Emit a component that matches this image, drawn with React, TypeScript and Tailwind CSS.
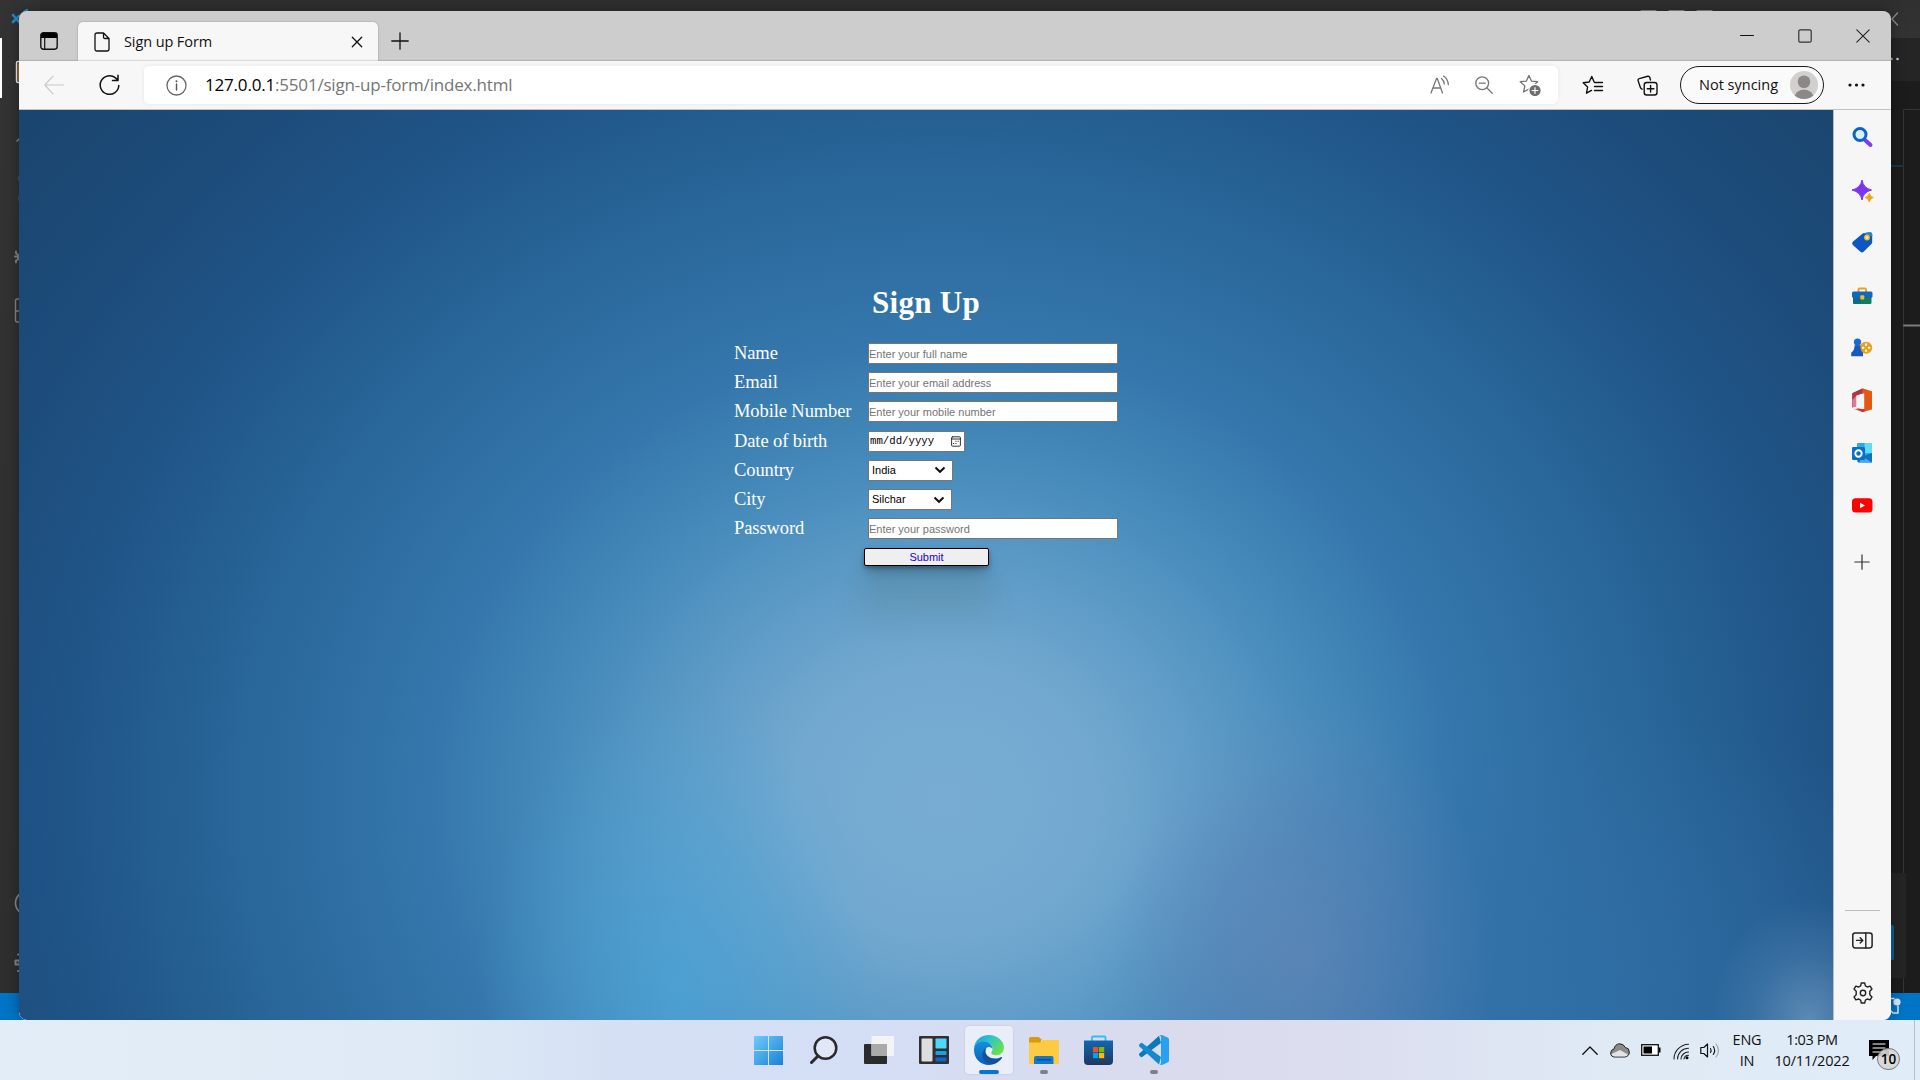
import React from "react";

const stroke = (color: string, width = 1.3) => ({
  fill: "none",
  stroke: color,
  strokeWidth: width,
  strokeLinecap: "round" as const,
  strokeLinejoin: "round" as const,
});

/* ---------- Editor window behind the browser ---------- */

function Backdrop() {
  return (
    <div className="absolute inset-0 flex flex-col bg-[#1e1e1e]">
      <div className="flex min-h-0 flex-1">
        <div className="w-10 bg-linear-to-b from-[#333333] to-[#2e2e2e]" />
        <div className="flex flex-1 flex-col">
          <div className="h-[38px] bg-linear-to-b from-[#2f2f2f] to-[#333333]" />
          <div className="h-[43px] bg-[#252525]" />
          <div className="flex-1 bg-[#1c1c1c]" />
        </div>
      </div>
      <div className="h-[27px] bg-[#0074c6]" />
      <svg className="absolute left-0 top-0" width="30" height="1020" viewBox="0 0 30 1020">
        <rect x="0" y="38" width="2" height="60" fill="#ffffff" />
        <path d="M13 15l6 7M13 22l6-6M24 12l3-2" {...stroke("#2489ca", 2.6)} />
        <rect x="16.5" y="61.5" width="10" height="21" rx="1.5" {...stroke("#e8f2ff", 1.4)} />
        <path d="M18.2 64v17" {...stroke("#b9791b", 1.4)} />
        <path d="M17 141l2-2" {...stroke("#858585", 1.6)} />
        <path d="M18.5 177v3M18.5 197v3" {...stroke("#35536f", 1.4)} />
        <path d="M16 251.500v2l2 1v5l-2 1v2M15 256.500h4" {...stroke("#858585", 1.8)} />
        <path d="M20 299h-2.500q-2 0-2 2v19q0 2 2 2h2.500M16 311h4" {...stroke("#858585", 1.4)} />
        <circle cx="27" cy="903" r="11.500" {...stroke("#8a8a8a", 1.6)} />
        <path d="M15.500 960.500h4v4h-4zM18 954.500h1M18 971h1" {...stroke("#858585", 2)} />
      </svg>
      <svg className="absolute right-0 top-0" width="290" height="1020" viewBox="1630 0 290 1020">
        <path d="M1641 10.500h15M1669 10.500h15M1697 10.500h15" {...stroke("#8b8b8b", 1)} />
        <path d="M1897.500 13l-5.500 6 5.500 6" {...stroke("#8b8b8b", 1.4)} />
        <circle cx="1891.500" cy="59" r="1.300" fill="#c9a26d" />
        <circle cx="1897.500" cy="59" r="1.300" fill="#b9cfe2" />
        <path d="M1920 109.500h-16.500V993" {...stroke("#343434", 1)} />
        <path d="M1891 166h12" {...stroke("#1d3548", 2)} />
        <path d="M1904 325.500h16" {...stroke("#7d7d7d", 2)} />
        <rect x="1880" y="873" width="26" height="105" fill="#252526" />
        <rect x="1880" y="925" width="14" height="35" rx="1.500" fill="#0e5f96" />
        <circle cx="1897" cy="1002" r="3.600" fill="#dbe9f4" />
        <path d="M1891 998.500h3M1891 1011l2 2h5v-7" {...stroke("#dbe9f4", 1.5)} />
      </svg>
    </div>
  );
}

/* ---------- Browser chrome ---------- */

function TitleBar() {
  return (
    <div className="flex h-[50px] shrink-0 bg-[#cdcdcd]">
      <svg className="ml-[21px] mt-[21px]" width="18" height="18" viewBox="0 0 18 18">
        <rect x="0.800" y="0.800" width="16.400" height="16.400" rx="2.600" {...stroke("#111", 1.4)} />
        <path d="M1 6V3.200Q1 1 3.200 1h11.600Q17 1 17 3.200V6z" fill="#000" />
        <path d="M4.700 5.500V17" {...stroke("#111", 1.2)} />
      </svg>
      <div className="ml-5 mt-[11px] flex h-[39px] w-[300px] items-center rounded-t-[5px] bg-[#f7f7f7] shadow-[0_0_2px_rgba(0,0,0,0.3)]">
        <svg className="ml-4" width="16" height="20" viewBox="0 0 16 20">
          <path d="M1 3Q1 1 3 1h6.500l5.500 5.500V17q0 2-2 2H3q-2 0-2-2zM9.500 1v4q0 1.500 1.500 1.500h4" {...stroke("#111", 1.3)} />
        </svg>
        <span className="ml-[14px] w-[120px] whitespace-nowrap font-['Open_Sans'] text-[14.5px] tracking-[-0.1px] text-[#111]">Sign up Form</span>
        <svg className="ml-auto mr-[15px] mt-px" width="12" height="12" viewBox="0 0 12 12">
          <path d="M1.300 1.300l9.400 9.400M10.700 1.300l-9.400 9.400" {...stroke("#111", 1.3)} />
        </svg>
      </div>
      <svg className="ml-[13px] mt-[21px]" width="18" height="18" viewBox="0 0 18 18">
        <path d="M9 .8v16.400M.8 9h16.400" {...stroke("#111", 1.3)} />
      </svg>
      <div className="ml-auto mr-[21px] mt-[18px] flex h-[14px] items-center gap-11">
        <svg width="14" height="14" viewBox="0 0 14 14"><path d="M.5 6.500h13" {...stroke("#111", 1)} /></svg>
        <svg width="14" height="14" viewBox="0 0 14 14"><rect x=".8" y=".8" width="12.400" height="12.400" rx="1.500" {...stroke("#333", 1.2)} /></svg>
        <svg width="14" height="14" viewBox="0 0 14 14"><path d="M.8.800l12.400 12.400M13.200.800L.8 13.200" {...stroke("#222", 1.1)} /></svg>
      </div>
    </div>
  );
}

const STAR = "M9 1.300l2.300 5.100 5.600.6-4.200 3.800 1.200 5.600L9 13.600l-4.900 2.800 1.200-5.600L1.100 7l5.600-.6z";

function Toolbar() {
  return (
    <div className="flex h-[49px] shrink-0 items-center border-b border-[#bfc3c7] bg-[#f7f7f7] shadow-[0_-1px_1px_rgba(0,0,0,0.12)]">
      <svg className="ml-[25px]" width="20" height="20" viewBox="0 0 20 20">
        <path d="M19.500 10H.8M9 1.200L.8 10l8.200 8.800" {...stroke("#cacaca", 1.2)} />
      </svg>
      <svg className="ml-[34.5px]" width="21" height="22" viewBox="0 0 21 22">
        <path d="M19.800 11.500a9.300 9.300 0 1 1-3.300-7.600l2.300 2.300M19 1.300v5.200h-5.500" {...stroke("#111", 1.5)} />
      </svg>
      <div className="ml-[24.5px] flex h-[38px] w-[1414px] items-center rounded-[5px] bg-white shadow-[0_0_4px_rgba(0,0,0,0.07)]">
        <svg className="ml-[22px]" width="21" height="21" viewBox="0 0 21 21">
          <circle cx="10.500" cy="10.500" r="9.500" {...stroke("#666", 1.3)} />
          <path d="M10.500 9v6" {...stroke("#555", 1.4)} />
          <circle cx="10.500" cy="6.300" r="1" fill="#555" />
        </svg>
        <span className="ml-[18px] whitespace-nowrap font-['Open_Sans'] text-[17px] tracking-[-0.19px] text-[#757575]">
          <span className="text-black">127.0.0.1</span>:5501/sign-up-form/index.html
        </span>
        <div className="ml-auto mr-[17px] flex items-center">
          <svg width="20" height="20" viewBox="0 0 20 20">
            <path d="M1 18L6.500 3.500h.8L12.500 18M3 13h7.600M11.500 3.500a8 8 0 0 1 2.800 5.500M13.500 1a11 11 0 0 1 4.800 8.500" {...stroke("#757575", 1.3)} />
          </svg>
          <svg className="ml-[25px]" width="18" height="18" viewBox="0 0 18 18">
            <circle cx="7.200" cy="7.200" r="6.400" {...stroke("#757575", 1.3)} />
            <path d="M4.200 7.200h6M12 12l5.200 5.200" {...stroke("#757575", 1.3)} />
          </svg>
          <svg className="ml-[26px]" width="22" height="22" viewBox="0 0 22 22">
            <g transform="scale(1.100)"><path d={STAR} {...stroke("#757575", 1.2)} /></g>
            <circle cx="16" cy="16.500" r="6.800" fill="#fff" />
            <circle cx="16" cy="16.500" r="5.600" fill="#6f6f6f" />
            <path d="M16 13.700v5.600M13.200 16.500h5.600" {...stroke("#fff", 1.2)} />
          </svg>
        </div>
      </div>
      <svg className="ml-6" width="22" height="21" viewBox="0 0 22 21">
        <path d="M12 6.800L9.800 1.500 7.200 7l-6 .8 4.400 4.200-1.100 6.200 5-2.800M12.500 7.500h8M12.500 11.500h8M12.500 15.500h8" {...stroke("#111", 1.4)} />
      </svg>
      <svg className="ml-[33px]" width="21" height="21" viewBox="0 0 21 21">
        <rect x="7.200" y="7.500" width="12.800" height="12.500" rx="2.500" {...stroke("#111", 1.4)} />
        <path d="M13.600 10.500v6.600M10.300 13.800h6.600M13.500 5l-.7-2.500q-.5-1.600-2.100-1.200L2.300 3.600Q.7 4 1.100 5.600l2.200 6.600q.5 1.500 1.800 2" {...stroke("#111", 1.4)} />
      </svg>
      <div className="ml-[22px] flex h-[38px] w-[144px] items-center rounded-full border-[1.5px] border-[#1a1a1a] bg-[#fafafa]">
        <span className="ml-[18px] w-[80px] whitespace-nowrap font-['Open_Sans'] text-[14.5px] text-[#111]">Not syncing</span>
        <svg className="ml-auto mr-[5px]" width="28" height="28" viewBox="0 0 28 28">
          <clipPath id="avatar"><circle cx="14" cy="14" r="14" /></clipPath>
          <circle cx="14" cy="14" r="14" fill="#d2d0ce" />
          <g clipPath="url(#avatar)" fill="#8b8885">
            <circle cx="14" cy="10.800" r="6.300" />
            <path d="M4 28a10 9.500 0 0 1 20 0z" />
          </g>
        </svg>
      </div>
      <svg className="ml-6" width="17" height="4" viewBox="0 0 17 4" fill="#111">
        <circle cx="2" cy="2" r="1.600" /><circle cx="8.500" cy="2" r="1.600" /><circle cx="15" cy="2" r="1.600" />
      </svg>
    </div>
  );
}

/* ---------- Sign-up page ---------- */

function Row({ label, children }: { label: string; children: React.ReactNode }) {
  return (
    <div className="flex h-[29.2px] items-center">
      <span className="w-[134px] whitespace-nowrap pb-px font-['Liberation_Serif'] text-[18.5px] leading-5 tracking-[-0.1px] text-white">{label}</span>
      {children}
    </div>
  );
}

function Field({ placeholder }: { placeholder: string }) {
  return (
    <input
      placeholder={placeholder}
      className="h-[21px] w-[250px] border border-[#767676] bg-white pt-px font-['Liberation_Sans'] text-[11px] text-black placeholder:text-[#757575]"
    />
  );
}

function Choice({ value, width }: { value: string; width: string }) {
  return (
    <div className={`flex h-[21px] items-center justify-between border border-[#767676] bg-white pl-[3px] pr-1.5 font-['Liberation_Sans'] text-[11px] text-black ${width}`}>
      <span>{value}</span>
      <svg width="12" height="8" viewBox="0 0 12 8"><path d="M1.500 1.500L6 5.800l4.500-4.300" fill="none" stroke="#111" strokeWidth="2" /></svg>
    </div>
  );
}

function Page() {
  return (
    <div className="relative flex flex-1 justify-center overflow-hidden rounded-bl-[8px] border-r border-[#b9bdc2] bg-[radial-gradient(ellipse_100px_120px_at_1790px_910px,rgba(115,155,195,0.7)_0%,rgba(90,140,185,0.32)_55%,transparent_100%),radial-gradient(ellipse_190px_270px_at_1285px_850px,rgba(108,136,184,0.6)_0%,rgba(102,134,184,0.38)_50%,transparent_100%),radial-gradient(ellipse_200px_300px_at_660px_880px,rgba(76,166,218,0.7)_0%,rgba(78,165,215,0.4)_50%,transparent_100%),radial-gradient(ellipse_480px_300px_at_1540px_900px,rgba(50,114,170,0.65)_0%,rgba(50,112,168,0.4)_50%,transparent_100%),radial-gradient(ellipse_830px_740px_at_925px_690px,#78acd3_0%,#73a9d0_18%,#5c9ac6_33%,#468bbb_46%,#3577ac_62%,#296699_85%,#205588_105%,#1d4c7b_122%,#19436b_150%)]">
      <div className="mt-[169px] flex w-[384px] flex-col">
        <h1 className="h-[60px] text-center font-['Liberation_Serif'] text-[31px] font-bold leading-[48px] tracking-[0.3px] text-white">Sign Up</h1>
        <Row label="Name"><Field placeholder="Enter your full name" /></Row>
        <Row label="Email"><Field placeholder="Enter your email address" /></Row>
        <Row label="Mobile Number"><Field placeholder="Enter your mobile number" /></Row>
        <Row label="Date of birth">
          <div className="flex h-[21px] w-[97px] items-center border border-[#767676] bg-white pl-px pr-[3px] text-black">
            <span className="font-['Liberation_Mono'] text-[10.7px]">mm/dd/yyyy</span>
            <svg className="ml-auto" width="10" height="11" viewBox="0 0 10 11">
              <rect x=".6" y=".8" width="8.800" height="9.400" rx="1" {...stroke("#333", 1)} />
              <path d="M.6 3h8.800" {...stroke("#333", 1)} />
              <path d="M2.500 7.500h.3M4.800 7.500h.3M4.800 5.300h.3M7 5.300h.3" {...stroke("#222", 1)} />
            </svg>
          </div>
        </Row>
        <Row label="Country"><Choice value="India" width="w-[85px]" /></Row>
        <Row label="City"><Choice value="Silchar" width="w-[84px]" /></Row>
        <Row label="Password"><Field placeholder="Enter your password" /></Row>
        <button className="ml-[130px] mt-[5px] h-[18px] w-[125px] rounded-[2px] border border-black bg-[#efefef] text-center font-['Liberation_Sans'] text-[11px] leading-4 text-[#1f00dd] shadow-[0_2px_4px_rgba(0,0,0,0.3),0_7px_13px_-3px_rgba(0,0,0,0.3),0_22px_20px_rgba(60,90,80,0.15),0_46px_30px_rgba(80,105,75,0.22)]">Submit</button>
      </div>
    </div>
  );
}

/* ---------- Browser sidebar ---------- */

const SIDE_ICONS: React.ReactNode[] = [
  <>
    <path d="M13 13l5.500 5" stroke="#7b3fe4" strokeWidth="4" strokeLinecap="round" />
    <circle cx="8" cy="7.500" r="6" fill="#d9f1ff" stroke="#0f62c8" strokeWidth="3" />
  </>,
  <>
    <path d="M10 0q1.300 8 9.500 10Q11.300 12 10 20 8.500 12 0 10 8.500 8 10 0z" fill="#7b35f2" stroke="#7b35f2" strokeWidth="1" strokeLinejoin="round" />
    <path d="M17.300 13q.8 3.800 4 4.500-3.200.8-4 4.500-.8-3.700-4.300-4.500 3.500-.7 4.300-4.500z" fill="#eea512" stroke="#eea512" strokeWidth=".8" strokeLinejoin="round" />
  </>,
  <>
    <path d="M11 1.200L18 .3q2 0 2.200 2v8q0 1-.8 1.800l-7.800 7.600q-1.600 1.500-3.200 0L.8 13q-1.500-1.600 0-3.200z" fill="#0b57c4" />
    <path d="M11 1.200L18 .3q2 0 2.200 2v2.200L12 2z" fill="#1c86d8" />
    <circle cx="15" cy="5.500" r="2.200" fill="#fff3b0" stroke="#f4b91c" strokeWidth="1.400" />
  </>,
  <g transform="translate(0 1)">
    <path d="M6.500 6V3.500q0-1 1-1h5.500q1 0 1 1V6" fill="none" stroke="#e9a31c" strokeWidth="2" />
    <rect x="1" y="8" width="18.500" height="10" rx="1.500" fill="#147d5b" />
    <rect x="1" y="9" width="8" height="8.500" fill="#0f6a88" />
    <rect x="0" y="5.500" width="20.500" height="6.300" rx="1.500" fill="#1267c4" />
    <rect x="8.300" y="9.300" width="4" height="4.200" rx="1" fill="#f5bb2a" />
  </g>,
  <g transform="translate(-.5 .8)">
    <ellipse cx="14.500" cy="10" rx="6.300" ry="6" fill="#e5a31d" />
    <path d="M14.500 6.500v.6M14.500 12.700v.6M11.300 10h.6M17.300 10h.6" stroke="#fff" strokeWidth="2" strokeLinecap="round" />
    <circle cx="6" cy="4.300" r="3.600" fill="#1c67d4" />
    <path d="M3 7.500h6q-.5 5 2.500 7.500v3.500H-.3V15Q3.500 12 3 7.500z" fill="#1759bd" />
  </g>,
  <>
    <path d="M10.500-1.500l5 1.800V20l-5 2-8.800-3.200 8.800 1V3.500L4.300 5v11L.3 17.300V3.200z" fill="#cf3a3e" />
    <path d="M.3 3.200L10.500-1.500v5L4.300 5.800V16L.3 17.500z" fill="#b43146" />
    <path d="M4.300 5.800V16L.3 17.500V10z" fill="#dc7a9c" />
    <path d="M4.300 5.800l8.200-2.800v16.500l-8.200-1.500z" fill="#f6f6f6" />
    <path d="M10.500-1.500l9.500 2.700V19.500L10.500 22l-6-3.500 8 .8V3.500l-2-.5z" fill="#e25a12" />
    <path d="M4.500 18.500l8 .8v2.200l-2 .5z" fill="#d32e35" />
  </>,
  <>
    <rect x="5" y="0" width="15" height="19" rx="1" fill="#2aa9ec" />
    <rect x="12.500" y="0" width="7.500" height="10" fill="#60dcfa" />
    <path d="M20 10v9.500H6V15z" fill="#1170be" />
    <path d="M20 19.500L8 12v7.500z" fill="#41aaf0" />
    <rect x="0" y="4" width="13" height="13" rx="1.300" fill="#0a6fcb" />
    <circle cx="6.500" cy="10.500" r="3.200" fill="none" stroke="#fff" strokeWidth="1.900" />
  </>,
  <>
    <rect x="0" y="3.300" width="20.500" height="14.300" rx="3.500" fill="#ff0000" />
    <path d="M8 7.800l5 2.700-5 2.700z" fill="#fff" />
  </>,
];

function Sidebar() {
  return (
    <div className="flex w-[57px] shrink-0 flex-col items-center rounded-br-[8px] bg-[#f6f6f6]">
      <div className="mt-[17px] flex flex-col gap-[31.600px]">
        {SIDE_ICONS.map((icon, i) => (
          <svg key={i} className="overflow-visible" width="21" height="21" viewBox="0 0 21 21">{icon}</svg>
        ))}
      </div>
      <svg className="mr-px mt-[38px]" width="16" height="16" viewBox="0 0 16 16">
        <path d="M8 .8v14.400M.8 8h14.400" {...stroke("#333", 1.2)} />
      </svg>
      <div className="mt-auto h-px w-[35px] bg-[#bdbdbd]" />
      <svg className="mt-[21px]" width="21" height="17" viewBox="0 0 21 17">
        <rect x=".8" y=".9" width="19.300" height="15" rx="2.300" {...stroke("#222", 1.5)} />
        <path d="M13.800 1v15M4.500 8.400h6M8.200 5.800l2.600 2.600-2.600 2.600" {...stroke("#222", 1.4)} />
      </svg>
      <svg className="mb-4 mt-[33px]" width="22" height="22" viewBox="0 0 22 22">
        <path d="M9.300 1h3.400l.7 2.900 1.900 1.100 2.900-.9 1.800 3-2.200 2.100v3.600l2.200 2.100-1.800 3-2.900-.9-1.900 1.100-.7 2.900H9.300l-.7-2.900-1.900-1.100-2.900.9-1.800-3 2.200-2.100V9.200L2 7.100l1.800-3 2.900.9 1.900-1.100z" {...stroke("#222", 1.4)} />
        <circle cx="11" cy="11" r="2.700" {...stroke("#222", 1.4)} />
      </svg>
    </div>
  );
}

/* ---------- Taskbar ---------- */

function AppIcon({ mark, active, children }: { mark?: string; active?: boolean; children: React.ReactNode }) {
  return (
    <div className="flex w-[55px] justify-center">
      <div className={`flex h-12 w-12 flex-col items-center rounded-[4px] pt-[9px] ${active ? "bg-[#eaeef9] shadow-[0_0_2px_rgba(0,0,0,0.15)]" : ""}`}>
        <svg width="30" height="30" viewBox="0 0 30 30">{children}</svg>
        {mark && <div className={`mt-[5px] h-1 rounded-full ${mark}`} />}
      </div>
    </div>
  );
}

function Taskbar() {
  return (
    <div className="relative flex h-[60px] bg-[linear-gradient(90deg,#e2edf7_0%,#dfeaf6_22%,#d5e0f4_32%,#d4def5_45%,#dadbed_62%,#dcdff0_72%,#dfeaf5_84%,#e0ecf7_100%)]">
      <div className="ml-[741px] flex pt-1.5">
        <AppIcon>
          <defs><linearGradient id="win" x1="0" y1="0" x2="1" y2="1"><stop offset="0" stopColor="#6ecbfb" /><stop offset="1" stopColor="#1c80d8" /></linearGradient></defs>
          <path d="M0 1.500q0-.5.500-.5h13.500v14H0zM15 1h13.500q.5 0 .5.500V15h-14zM0 16h14v14H.500q-.5 0-.5-.5zM15 16h14v13.500q0 .5-.5.500H15z" fill="url(#win)" />
        </AppIcon>
        <AppIcon>
          <circle cx="16.500" cy="13" r="10.800" fill="#e9edf7" fillOpacity=".6" stroke="#2a2a2a" strokeWidth="2.500" />
          <path d="M9 21l-6.500 6.500" {...stroke("#2a2a2a", 3)} />
        </AppIcon>
        <AppIcon>
          <rect x="0" y="9" width="23" height="20" rx="1" fill="#2b2b2b" />
          <rect x="7.500" y="1" width="22.500" height="20" rx="1" fill="#f4f4f6" />
          <rect x="7.500" y="9" width="15.500" height="12" fill="#aaaaaa" />
        </AppIcon>
        <AppIcon>
          <rect x="0" y="1" width="30" height="28" rx="1" fill="#303030" />
          <rect x="2.500" y="3.500" width="11" height="23" rx="1" fill="#dedede" />
          <rect x="16.500" y="3.500" width="11" height="10" rx=".8" fill="#4fd6ff" />
          <rect x="16.500" y="16" width="11" height="4" rx=".8" fill="#1d9fe0" />
          <rect x="16.500" y="22.500" width="11" height="4" rx=".8" fill="#0f66cf" />
        </AppIcon>
        <AppIcon active mark="w-5 bg-[#0675d4]">
          <defs>
            <linearGradient id="edgeTop" x1="0" y1="0" x2="1" y2=".55"><stop offset="0" stopColor="#1b9de2" /><stop offset=".5" stopColor="#2fc3cf" /><stop offset="1" stopColor="#69e04c" /></linearGradient>
            <linearGradient id="edgeLow" x1="0" y1="0" x2="0" y2="1"><stop offset="0" stopColor="#1690dc" /><stop offset="1" stopColor="#0a5bb4" /></linearGradient>
          </defs>
          <path d="M0 14C.5 5 7 0 15 0s15 6 15 12.500c0 4.500-3.500 7.700-7.800 7.700-3.400 0-5-1.200-5-2.200s1.400-1.600 1.400-4.200C18.600 9.500 14.500 7 10 7 5 7 1.500 10 0 14z" fill="url(#edgeTop)" />
          <path d="M0 15C0 9.500 4.500 6.500 9.500 6.500c5 0 9 3 9 7.500-2-3.500-7.500-2.500-7.500 3 0 7 8 11.500 12.500 10-2.500 2-5.500 3-8.500 3C6.500 30 0 23.500 0 15z" fill="url(#edgeLow)" />
          <path d="M12 13c-4 3-4.500 8-2 12 3 4 9 5.500 14 2 1.800-1.200 3.200-2.800 4-4.300.3-.7-.2-1-.8-.7-2 1-4 1.500-6.200 1.500-5.500 0-9.500-3.500-9.500-7 0-1.500.2-2.500.5-3.500z" fill="#11529f" />
        </AppIcon>
        <AppIcon mark="w-2 bg-[#7c8087]">
          <path d="M0 3.500Q0 2 1.500 2H9q1 0 2 1l2 2h-1v5H0z" fill="#dc9a0a" />
          <path d="M0 7.500h11l2.500-2.500H29q1 0 1 1v22q0 1-1 1H1q-1 0-1-1z" fill="#fdcb43" />
          <path d="M5 29v-6q0-2 2-2h15.500q2 0 2 2v6z" fill="#1377cc" />
          <path d="M8.500 24.700h13" {...stroke("#0b4f92", 1.4)} />
        </AppIcon>
        <AppIcon>
          <defs><linearGradient id="store" x1="0" y1="0" x2="0" y2="1"><stop offset="0" stopColor="#0f68b4" /><stop offset="1" stopColor="#20375f" /></linearGradient></defs>
          <path d="M8 6V2.500q0-1 1-1h11.500q1 0 1 1V6" fill="none" stroke="#30bdf0" strokeWidth="1.800" />
          <path d="M0 5.500h29V26q0 4-4 4H4q-4 0-4-4z" fill="url(#store)" />
          <path d="M9 12h5.200v5.200H9z" fill="#f25022" /><path d="M15 12h5.200v5.200H15z" fill="#7fba00" />
          <path d="M9 18h5.200v5.200H9z" fill="#00a4ef" /><path d="M15 18h5.200v5.200H15z" fill="#ffb900" />
        </AppIcon>
        <AppIcon mark="w-2 bg-[#7c8087]">
          <path d="M22 8L3.500 21.800q-1 .8-2 0L.4 20.600q-1-1 0-2L20 .8z" fill="#0b77bd" />
          <path d="M22 22L3.500 8.200q-1-.8-2 0L.4 9.400q-1 1 0 2L20 29.500z" fill="#1289d0" />
          <path d="M20.500.3L23 0l6 2.800q1 .5 1 1.600v21.200q0 1.100-1 1.600L23 30l-2.500-.5q1.500-.5 1.500-2V2.500q0-1.700-1.500-2.200z" fill="#27a0ee" />
        </AppIcon>
      </div>
      <div className="ml-auto mr-[5px] flex items-center border-r border-[#b5bfca] font-['Open_Sans'] text-[14.5px] leading-[21px] text-[#111]">
        <svg width="16" height="9" viewBox="0 0 16 9"><path d="M.8 8.200L8 1l7.200 7.200" {...stroke("#111", 1.3)} /></svg>
        <svg className="ml-3" width="20" height="15" viewBox="0 0 20 15">
          <path d="M5 14q-4.300 0-4.300-4Q.7 6.700 4 6 5 1 9.700.8q4 0 5.600 3.700 4 .3 4 4.500T15 14z" fill="#8b8b8b" stroke="#222" strokeWidth="1" />
          <path d="M5 13.500Q2 13.500 1.500 11L10 7l8 4.500q-1 2-3 2z" fill="#e4e4e4" />
        </svg>
        <svg className="ml-[11px]" width="20" height="12" viewBox="0 0 20 12">
          <rect x=".7" y=".7" width="16.600" height="10.600" fill="#fff" stroke="#111" strokeWidth="1.300" />
          <rect x="2.500" y="2.500" width="8.500" height="7" /><rect x="18" y="3.500" width="1.500" height="5" />
        </svg>
        <svg className="ml-3 mt-0.5" width="17" height="17" viewBox="0 0 17 17">
          <path d="M1 16A15 15 0 0 1 15.500 1.200M4.500 16A11 11 0 0 1 15.500 5.200M8 16a7.500 7.500 0 0 1 7.500-7M11 16a4.500 4.500 0 0 1 4.500-3.800" {...stroke("#222", 1.1)} />
          <circle cx="14" cy="14.800" r="1.500" />
        </svg>
        <svg className="ml-[10px]" width="21" height="17" viewBox="0 0 21 17">
          <path d="M.8 5.500h3l3.700-3.500v13L3.800 11.500h-3z" {...stroke("#111", 1.2)} />
          <path d="M10.500 6.500q1.300 2 0 4M13.300 4.500q2.700 4 0 8" {...stroke("#111", 1.1)} />
          <path d="M16 2q5 6.500 0 13" {...stroke("#9aa0a8", 1.1)} />
        </svg>
        <div className="ml-[8px] flex w-9 flex-col items-center tracking-[-0.2px]"><span>ENG</span><span>IN</span></div>
        <div className="ml-[7px] flex w-[80px] flex-col items-center tracking-[-0.2px]"><span className="tracking-[-0.4px]">1:03 PM</span><span>10/11/2022</span></div>
        <div className="relative ml-[17px] mr-[25px] h-5 w-5">
          <svg width="20" height="20" viewBox="0 0 20 20"><path d="M0 0h20v16H7l-3.500 4v-4H0z" /><path d="M4 4h12M4 8h12M4 12h12" {...stroke("#fff", 1.2)} /></svg>
          <span className="absolute left-2 top-2 flex h-[22px] w-[23px] items-center justify-center rounded-full border border-[#777] bg-[#d6d6d6]/90 text-[13.5px] font-semibold text-black">10</span>
        </div>
      </div>
    </div>
  );
}

export default function App() {
  return (
    <div className="flex h-[1080px] w-[1920px] flex-col overflow-hidden">
      <div className="relative h-[1020px]">
        <Backdrop />
        <div className="absolute left-[19px] top-[11px] flex h-[1009px] w-[1872px] flex-col overflow-hidden rounded-[8px] shadow-[0_0_14px_rgba(0,0,0,0.35)]">
          <TitleBar />
          <Toolbar />
          <div className="flex min-h-0 flex-1 bg-[#f6f6f6]">
            <Page />
            <Sidebar />
          </div>
        </div>
      </div>
      <Taskbar />
    </div>
  );
}
